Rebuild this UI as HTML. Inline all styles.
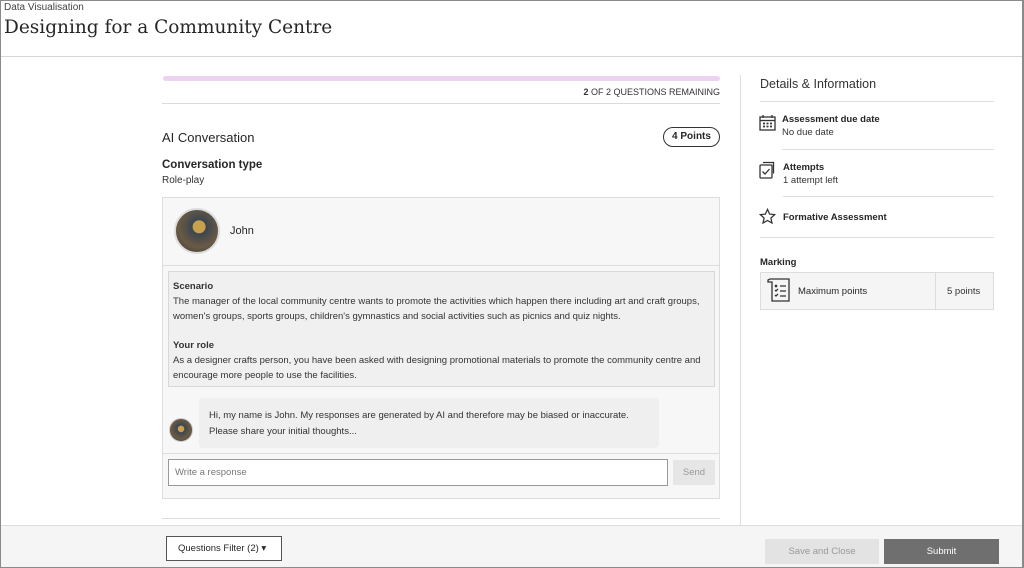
<!DOCTYPE html>
<html><head><meta charset="utf-8"><style>
*{box-sizing:border-box;margin:0;padding:0}
body{width:1024px;height:568px;overflow:hidden;background:#fff;font-family:"Liberation Sans",sans-serif;color:#262626;position:relative}
.a{position:absolute}
.frame{left:0;top:0;width:1024px;height:568px;border:1px solid #8a8a8a;border-right:2px solid #8a8a8a}
.s{font-size:10px;color:#333}
.b{font-weight:bold}
</style></head><body>
<div class="a frame"></div>
<div class="a" style="left:4px;top:2px;font-size:10px;color:#444">Data Visualisation</div>
<div class="a" style="left:4px;top:17px;font-family:'DejaVu Serif',serif;font-size:18.5px;color:#262626">Designing for a Community Centre</div>
<div class="a" style="left:1px;top:56px;width:1021px;height:1px;background:#d6d6d6"></div>

<div class="a" style="left:163px;top:76px;width:557px;height:5px;border-radius:3px;background:#ecd3ef"></div>
<div class="a" style="left:162px;top:87px;width:558px;text-align:right;font-size:9px;color:#333"><b>2</b> OF 2 QUESTIONS REMAINING</div>
<div class="a" style="left:162px;top:103px;width:558px;height:1px;background:#dcdcdc"></div>
<div class="a" style="left:162px;top:130px;font-size:13px">AI Conversation</div>
<div class="a" style="left:663px;top:127px;width:57px;height:20px;border:1px solid #333;border-radius:10px;font-size:10px;font-weight:bold;text-align:center;line-height:18px">4 Points</div>
<div class="a b" style="left:162px;top:159px;font-size:11.5px">Conversation type</div>
<div class="a s" style="left:162px;top:175px">Role-play</div>

<div class="a" style="left:162px;top:197px;width:558px;height:302px;background:#f7f7f7;border:1px solid #ddd"></div>
<div class="a" style="left:163px;top:265px;width:556px;height:1px;background:#ddd"></div>
<div class="a" style="left:174px;top:208px;width:46px;height:46px;border-radius:50%;border:2px solid #ddd;background:radial-gradient(circle at 55% 40%,#c9a14d 0 18%,#3b4650 20%,#6b5a44 60%,#2d3338)"></div>
<div class="a" style="left:230px;top:225px;font-size:11px">John</div>
<div class="a" style="left:168px;top:271px;width:547px;height:116px;background:#f0f0f0;border:1px solid #d8d8d8"></div>
<div class="a" style="left:173px;top:279px;font-size:9.5px;line-height:15px;color:#333;width:540px"><b>Scenario</b><br>The manager of the local community centre wants to promote the activities which happen there including art and craft groups, women's groups, sports groups, children's gymnastics and social activities such as picnics and quiz nights.<br><div style="height:14px"></div><b>Your role</b><br>As a designer crafts person, you have been asked with designing promotional materials to promote the community centre and encourage more people to use the facilities.</div>
<div class="a" style="left:169px;top:418px;width:24px;height:24px;border-radius:50%;border:1px solid #ccc;background:radial-gradient(circle at 50% 45%,#c9a14d 0 18%,#3b4650 22%,#6b5a44 60%,#2d3338)"></div>
<div class="a" style="left:199px;top:398px;width:460px;height:50px;background:#efefef;border-radius:4px"></div>
<div class="a" style="left:209px;top:408px;font-size:9.5px;line-height:16px;color:#333">Hi, my name is John. My responses are generated by AI and therefore may be biased or inaccurate.<br>Please share your initial thoughts...</div>
<div class="a" style="left:163px;top:453px;width:556px;height:1px;background:#ddd"></div>
<div class="a" style="left:168px;top:459px;width:500px;height:27px;background:#fff;border:1px solid #999;font-size:9.5px;color:#777;padding:7px 6px"> Write a response</div>
<div class="a" style="left:673px;top:460px;width:42px;height:25px;background:#e6e6e6;font-size:9.5px;color:#999;text-align:center;line-height:25px">Send</div>
<div class="a" style="left:162px;top:518px;width:558px;height:1px;background:#ddd"></div>

<div class="a" style="left:740px;top:75px;width:1px;height:451px;background:#ddd"></div>
<div class="a" style="left:760px;top:77px;font-size:12.5px;color:#333">Details &amp; Information</div>
<div class="a" style="left:760px;top:101px;width:234px;height:1px;background:#ddd"></div>
<svg class="a" style="left:759px;top:114px" width="17" height="18" viewBox="0 0 17 18" fill="none" stroke="#333" stroke-width="1.3"><rect x="1" y="3" width="15" height="13"/><line x1="1" y1="6.5" x2="16" y2="6.5"/><line x1="4" y1="1" x2="4" y2="4"/><line x1="13" y1="1" x2="13" y2="4"/><path d="M4 9.5h2M7.5 9.5h2M11 9.5h2M4 12.5h2M7.5 12.5h2M11 12.5h2" stroke-width="1.8"/></svg>
<div class="a b" style="left:782px;top:114px;font-size:9.5px">Assessment due date</div>
<div class="a s" style="left:782px;top:127px;font-size:9.5px">No due date</div>
<div class="a" style="left:782px;top:149px;width:212px;height:1px;background:#ddd"></div>
<svg class="a" style="left:759px;top:161px" width="17" height="18" viewBox="0 0 17 18" fill="none" stroke="#333" stroke-width="1.3"><rect x="1" y="4" width="12" height="13" rx="1"/><path d="M4 1.5h10.5v11"/><path d="M3.5 10.5l2.5 2.5 4.5-5"/></svg>
<div class="a b" style="left:783px;top:162px;font-size:9.5px">Attempts</div>
<div class="a s" style="left:783px;top:175px;font-size:9.5px">1 attempt left</div>
<div class="a" style="left:783px;top:196px;width:211px;height:1px;background:#ddd"></div>
<svg class="a" style="left:759px;top:208px" width="17" height="17" viewBox="0 0 24 24" fill="none" stroke="#333" stroke-width="1.8"><path d="M12 2l3 6.6 7 .8-5.2 4.8 1.5 7L12 17.6 5.7 21.2l1.5-7L2 9.4l7-.8z"/></svg>
<div class="a b" style="left:783px;top:212px;font-size:9.5px">Formative Assessment</div>
<div class="a" style="left:760px;top:237px;width:234px;height:1px;background:#ddd"></div>
<div class="a b" style="left:760px;top:257px;font-size:9.5px">Marking</div>
<div class="a" style="left:760px;top:272px;width:234px;height:38px;background:#f5f5f5;border:1px solid #ddd"></div>
<div class="a" style="left:935px;top:273px;width:1px;height:36px;background:#ddd"></div>
<svg class="a" style="left:766px;top:277px" width="26" height="26" viewBox="0 0 26 26" fill="none" stroke="#333" stroke-width="1.3"><path d="M4 2h19v22H6V5H2V3z"/><path d="M9 8l2 2M11 8l-2 2M9 13l1 1 2-2M9 18l1 1 2-2M14 9h6M14 14h6M14 19h6"/></svg>
<div class="a" style="left:798px;top:286px;font-size:9.5px">Maximum points</div>
<div class="a s" style="left:947px;top:286px;font-size:9.5px">5 points</div>

<div class="a" style="left:1px;top:525px;width:1021px;height:42px;background:#f5f5f5;border-top:1px solid #ddd"></div>
<div class="a" style="left:166px;top:536px;width:116px;height:25px;background:#fff;border:1px solid #555;font-size:9.5px;line-height:23px;padding-left:11px">Questions Filter (2) ▾</div>
<div class="a" style="left:765px;top:539px;width:114px;height:25px;background:#e3e3e3;color:#999;font-size:9.5px;text-align:center;line-height:25px">Save and Close</div>
<div class="a" style="left:884px;top:539px;width:115px;height:25px;background:#6f6f6f;color:#fff;font-size:9.5px;text-align:center;line-height:25px">Submit</div>
</body></html>
